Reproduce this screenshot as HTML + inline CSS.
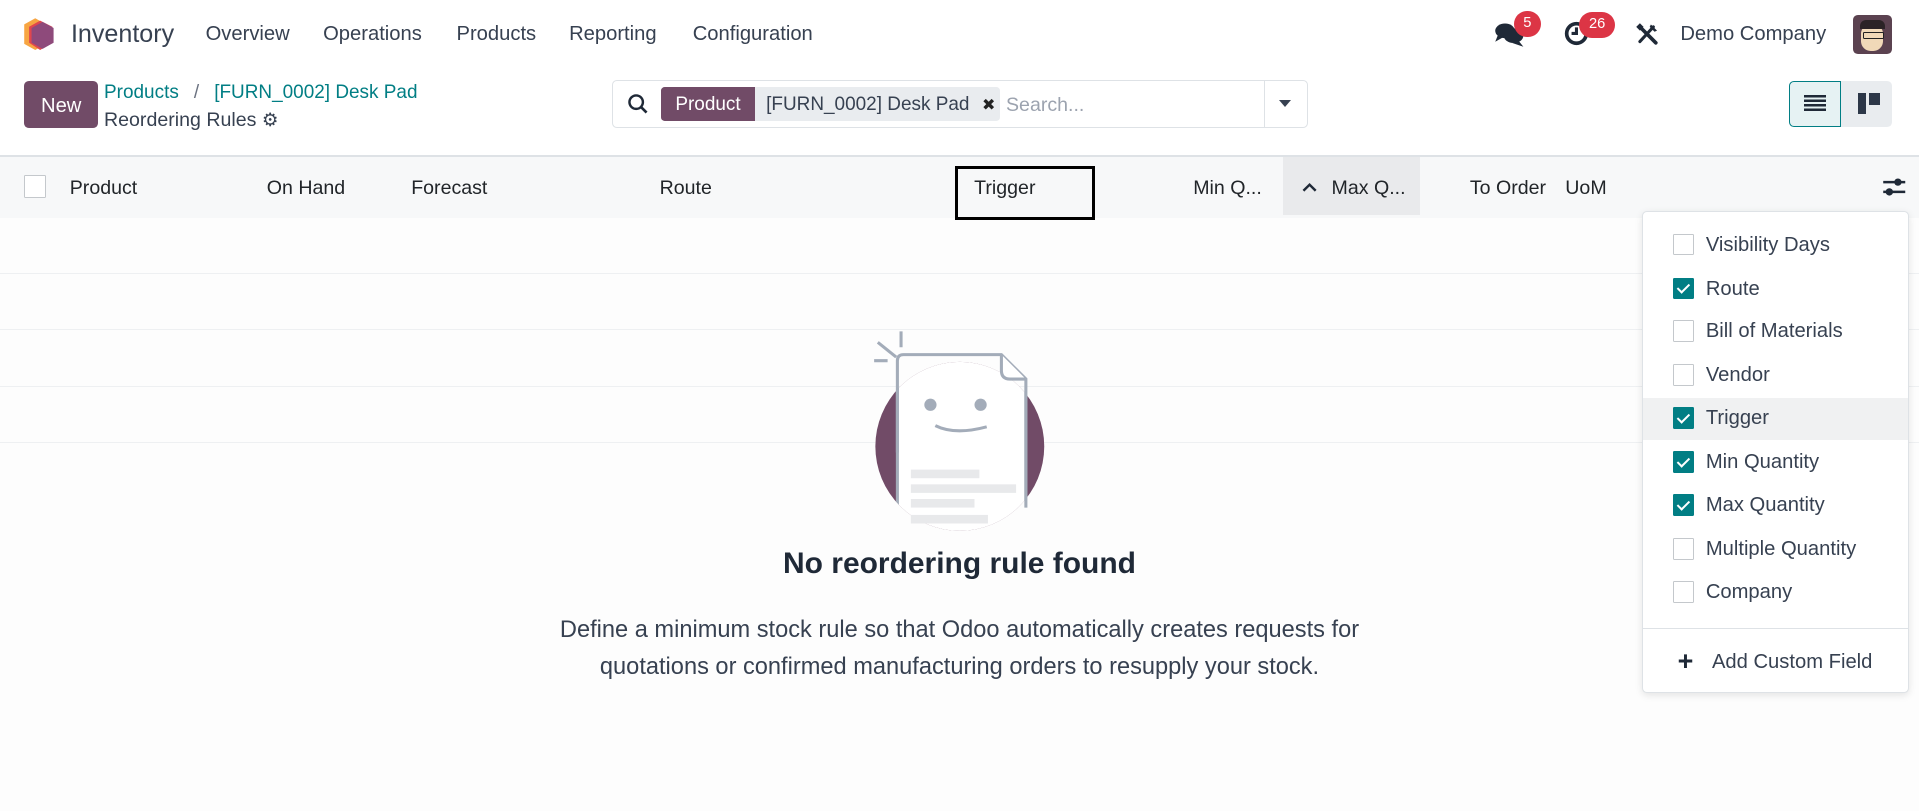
<!DOCTYPE html>
<html><head><meta charset="utf-8">
<style>
html,body{margin:0;padding:0;overflow:hidden;background:#fff}
#root{position:relative;width:1568px;height:663px;zoom:1.22385;font-family:"Liberation Sans",sans-serif;color:#212529;background:#fdfdfd;overflow:hidden}
.a{position:absolute;white-space:nowrap}
.nav{font-size:16.5px;color:#374151;top:18px}
.col{font-size:16px;color:#212529;top:144px}
.cb{position:absolute;width:16px;height:16px;border:1px solid #c4c8cc;background:#fff;border-radius:1px}
.ck{background:#017e84;border-color:#017e84}
.ck:after{content:"";position:absolute;left:5px;top:2px;width:4px;height:8px;border:solid #fff;border-width:0 2px 2px 0;transform:rotate(45deg)}
.it{position:absolute;left:0;width:216px;height:35px}
.it .cb{left:24px;top:8px}
.it span{position:absolute;left:51px;top:8px;font-size:16.5px;color:#374151}
.line{position:absolute;left:0;width:1568px;height:1px;background:#eef0f2}
</style></head><body><div id="root">
<div class="a" style="left:0;top:0;width:1568px;height:55px;background:#fff"></div>
<svg class="a" style="left:19px;top:14px" width="27" height="28" viewBox="0 0 27 28"><polygon points="10,1 19,6 19,22 10,27 1,22 1,6" fill="#f7a542"/><polygon points="14,3 24,8 24,21 14,27 5,21 5,8" fill="#e0464e"/><polygon points="16,4 25,9 25,21 16,26 7,21 7,9" fill="#8e4a7b"/></svg>
<div class="a" style="left:58px;top:16px;font-size:20.5px;color:#374151">Inventory</div>
<div class="a nav" style="left:168px;top:19px">Overview</div>
<div class="a nav" style="left:264px;top:19px">Operations</div>
<div class="a nav" style="left:373px;top:19px">Products</div>
<div class="a nav" style="left:465px;top:19px">Reporting</div>
<div class="a nav" style="left:566px;top:19px">Configuration</div>
<svg class="a" style="left:1221px;top:17px" width="26" height="22" viewBox="0 0 26 22"><ellipse cx="9" cy="8" rx="8" ry="6" fill="#1f2937"/><path d="M3 12 L1 17 L8 13Z" fill="#1f2937"/><ellipse cx="16" cy="12" rx="8" ry="6" fill="#1f2937"/><path d="M20 16 L24 21 L15 18Z" fill="#1f2937"/></svg>
<div class="a" style="left:1237px;top:9px;width:22px;height:21px;border-radius:11px;background:#dc3545;color:#fff;font-size:12px;text-align:center;line-height:21px">5</div>
<svg class="a" style="left:1277px;top:16px" width="22" height="22" viewBox="0 0 22 22"><circle cx="11" cy="11" r="8" fill="none" stroke="#1f2937" stroke-width="3"/><path d="M11 6v5h-4" fill="none" stroke="#1f2937" stroke-width="2.5"/></svg>
<div class="a" style="left:1290px;top:10px;width:30px;height:21px;border-radius:11px;background:#dc3545;color:#fff;font-size:12px;text-align:center;line-height:21px">26</div>
<svg class="a" style="left:1336px;top:18px" width="20" height="20" viewBox="0 0 20 20"><path d="M5 5 L17 17" stroke="#1f2937" stroke-width="3" stroke-linecap="round"/><path d="M15 4 L4 16" stroke="#1f2937" stroke-width="2.5" stroke-linecap="round"/><path d="M1 4 L4 1 L7 4 L4 7Z" fill="#1f2937"/><path d="M13 2 L18 7 L16 8 L12 4Z" fill="#1f2937"/></svg>
<div class="a" style="left:1373px;top:19px;font-size:16.5px;color:#374151">Demo Company</div>
<div class="a" style="left:1514px;top:12px;width:32px;height:32px;border-radius:4px;background:#5b4250;overflow:hidden"><div class="a" style="left:7px;top:8px;width:18px;height:22px;border-radius:8px;background:#f1d9b8"></div><div class="a" style="left:6px;top:4px;width:20px;height:8px;border-radius:5px 5px 0 0;background:#2b2326"></div><div class="a" style="left:8px;top:14px;width:16px;height:4px;border:1px solid #222;border-radius:1px"></div></div>
<div class="a" style="left:0;top:55px;width:1568px;height:72px;background:#fff"></div>
<div class="a" style="left:20px;top:66px;width:60px;height:39px;background:#714b67;border-radius:4px;color:#fff;font-size:16.5px;text-align:center;line-height:41px">New</div>
<div class="a" style="left:85px;top:67px;font-size:15.5px;color:#017e84">Products <span style="color:#6b7280;margin:0 8px">/</span> [FURN_0002] Desk Pad</div>
<div class="a" style="left:85px;top:89px;font-size:16px;color:#374151">Reordering Rules <span style="font-size:15px;color:#374151">&#9881;</span></div>
<div class="a" style="left:500px;top:65px;width:567px;height:38px;border:1px solid #dee2e6;border-radius:4px;background:#fff"></div>
<svg class="a" style="left:512px;top:76px" width="18" height="18" viewBox="0 0 18 18"><circle cx="7.5" cy="7.5" r="5.5" fill="none" stroke="#1f2937" stroke-width="2"/><path d="M11.5 11.5 L16 16" stroke="#1f2937" stroke-width="2.2"/></svg>
<div class="a" style="left:540px;top:71px;width:77px;height:28px;background:#714b67;border-radius:3px 0 0 3px;color:#fff;font-size:15.5px;text-align:center;line-height:30px">Product</div>
<div class="a" style="left:617px;top:71px;width:200px;height:28px;background:#e9ecef;border-radius:0 3px 3px 0;color:#374151;font-size:15.5px;line-height:30px;padding-left:9px;box-sizing:border-box">[FURN_0002] Desk Pad <span style="font-size:13px;margin-left:6px;color:#222">&#10006;</span></div>
<div class="a" style="left:822px;top:77px;font-size:16px;color:#9ca3af">Search...</div>
<div class="a" style="left:1033px;top:66px;width:1px;height:38px;background:#dee2e6"></div>
<div class="a" style="left:1045px;top:82px;width:0;height:0;border-left:5px solid transparent;border-right:5px solid transparent;border-top:6px solid #374151"></div>
<div class="a" style="left:1462px;top:66px;width:41px;height:36px;background:#e6f2f3;border:1px solid #017e84;border-radius:4px 0 0 4px"></div>
<div class="a" style="left:1474px;top:78px;width:18px;height:13px;background:repeating-linear-gradient(#1f2937 0 2px,transparent 2px 3.7px)"></div>
<div class="a" style="left:1504px;top:66px;width:42px;height:38px;background:#e9ecef;border-radius:0 4px 4px 0"></div>
<div class="a" style="left:1518px;top:76px;width:7px;height:17px;background:#2d3748"></div>
<div class="a" style="left:1527px;top:76px;width:9px;height:10px;background:#2d3748"></div>
<div class="line" style="top:127px;background:#dee2e6"></div>
<div class="a" style="left:0;top:128px;width:1568px;height:50px;background:#f7f8f9"></div>
<div class="cb" style="left:20px;top:143px;width:16px;height:17px"></div>
<div class="a col" style="left:57px;top:145px">Product</div>
<div class="a col" style="left:218px;top:145px">On Hand</div>
<div class="a col" style="left:336px;top:145px">Forecast</div>
<div class="a col" style="left:539px;top:145px">Route</div>
<div class="a" style="left:780px;top:136px;width:110px;height:39px;border:3px solid #000"></div>
<div class="a col" style="left:796px;top:145px">Trigger</div>
<div class="a col" style="left:975px;top:145px">Min Q...</div>
<div class="a" style="left:1048px;top:128px;width:112px;height:48px;background:#e9eaec"></div>
<svg class="a" style="left:1063px;top:148px" width="14" height="10" viewBox="0 0 14 10"><path d="M2 8 L7 3 L12 8" fill="none" stroke="#1f2937" stroke-width="2"/></svg>
<div class="a col" style="left:1088px;top:145px">Max Q...</div>
<div class="a col" style="left:1201px;top:145px">To Order</div>
<div class="a col" style="left:1279px;top:145px">UoM</div>
<svg class="a" style="left:1538px;top:144px" width="20" height="18" viewBox="0 0 20 18"><path d="M1 5h18M1 13h18" stroke="#1f2937" stroke-width="2"/><circle cx="13" cy="5" r="3" fill="#1f2937"/><circle cx="6" cy="13" r="3" fill="#1f2937"/></svg>
<div class="line" style="top:223px"></div>
<div class="line" style="top:269px"></div>
<div class="line" style="top:315px"></div>
<div class="line" style="top:361px"></div>
<svg class="a" style="left:700px;top:265px" width="170" height="180" viewBox="0 0 170 180">
<defs><clipPath id="c"><circle cx="84" cy="100" r="69"/></clipPath></defs>
<circle cx="84" cy="100" r="69" fill="#714b67"/>
<g clip-path="url(#c)"><path d="M33 30 Q33 25 38 25 L118 25 L138 45 L138 190 L33 190Z" fill="#fff" stroke="#a3acb9" stroke-width="2.5"/></g>
<path d="M33 105 L33 30 Q33 25 38 25 L118 25 L138 45 L138 150" fill="none" stroke="#a3acb9" stroke-width="2.5"/>
<path d="M118 25 L118 38 Q118 45 125 45 L138 45" fill="#fff" stroke="#a3acb9" stroke-width="2.5"/>
<path d="M17 15 L32 27 M36 6 L36 19 M14 30 L25 30" stroke="#a3acb9" stroke-width="2.5"/>
<circle cx="60" cy="66" r="5" fill="#a3acb9"/><circle cx="101" cy="66" r="5" fill="#a3acb9"/>
<path d="M64 83 Q80 91 106 84" fill="none" stroke="#a3acb9" stroke-width="2.5"/>
<rect x="44" y="119" width="56" height="7" fill="#e8e9eb"/><rect x="44" y="131" width="86" height="7" fill="#e8e9eb"/><rect x="44" y="143" width="52" height="7" fill="#e8e9eb"/><rect x="44" y="156" width="63" height="7" fill="#e8e9eb"/>
</svg>
<div class="a" style="left:434px;top:447px;width:700px;text-align:center;font-size:24.5px;font-weight:bold;color:#1f2937">No reordering rule found</div>
<div class="a" style="left:334px;top:500px;width:900px;text-align:center;font-size:19.3px;color:#374151;line-height:30px;white-space:normal">Define a minimum stock rule so that Odoo automatically creates requests for<br>quotations or confirmed manufacturing orders to resupply your stock.</div>
<div class="a" style="left:1342px;top:172px;width:216px;height:393px;background:#fff;border:1px solid #dee2e6;border-radius:4px;box-shadow:0 2px 6px rgba(0,0,0,.1)">
<div class="it" style="top:10px"><div class="cb"></div><span>Visibility Days</span></div>
<div class="it" style="top:46px"><div class="cb ck"></div><span>Route</span></div>
<div class="it" style="top:81px"><div class="cb"></div><span>Bill of Materials</span></div>
<div class="it" style="top:117px"><div class="cb"></div><span>Vendor</span></div>
<div class="it" style="top:152px;background:#f0f1f2"><div class="cb ck"></div><span>Trigger</span></div>
<div class="it" style="top:188px"><div class="cb ck"></div><span>Min Quantity</span></div>
<div class="it" style="top:223px"><div class="cb ck"></div><span>Max Quantity</span></div>
<div class="it" style="top:259px"><div class="cb"></div><span>Multiple Quantity</span></div>
<div class="it" style="top:294px"><div class="cb"></div><span>Company</span></div>
<div class="a" style="left:0;top:340px;width:216px;height:1px;background:#dee2e6"></div>
<div class="a" style="left:28px;top:355px;font-size:22px;font-weight:bold;color:#1f2937">+</div>
<div class="a" style="left:56px;top:359px;font-size:16.5px;color:#374151">Add Custom Field</div>
</div>
</div></body></html>
